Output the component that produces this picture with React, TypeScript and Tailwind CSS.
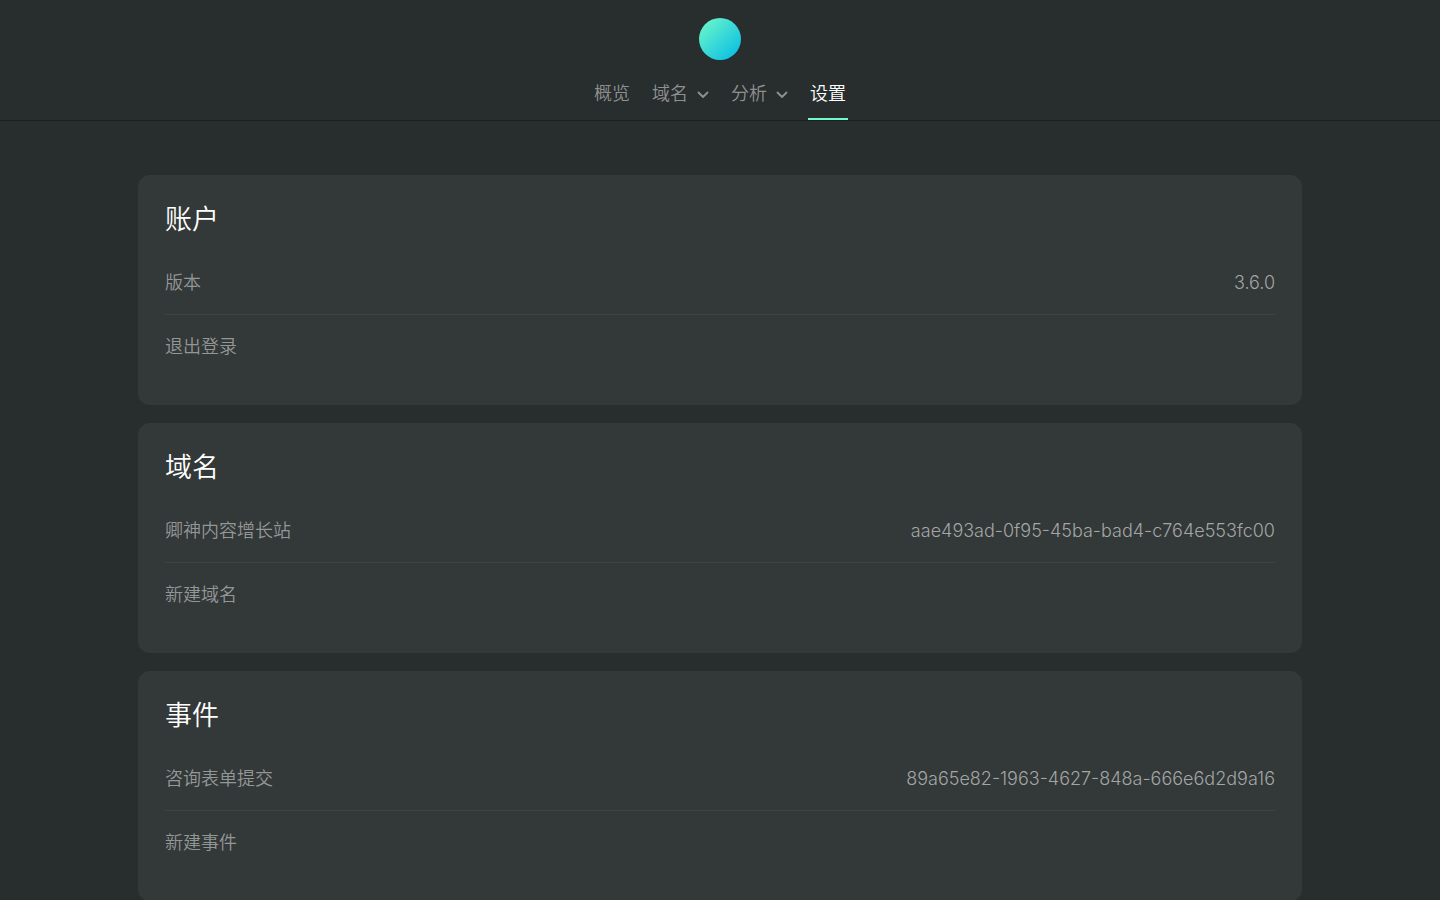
import clsx from 'clsx'

const navItems = [
    { label: '概览' },
    { label: '域名', menu: true },
    { label: '分析', menu: true },
    { label: '设置', active: true },
]

const cards = [
    { title: '账户', label: '版本', value: '3.6.0', action: '退出登录' },
    { title: '域名', label: '卿神内容增长站', value: 'aae493ad-0f95-45ba-bad4-c764e553fc00', action: '新建域名' },
    { title: '事件', label: '咨询表单提交', value: '89a65e82-1963-4627-848a-666e6d2d9a16', action: '新建事件' },
]

function Chevron() {
    return (
        <svg className="ml-[9px] mt-[3px] h-2 w-3" viewBox="0 0 12 8" fill="none" stroke="currentColor" strokeWidth="1.8" strokeLinecap="round" strokeLinejoin="round" aria-hidden="true">
            <path d="M1.5 1.5 L6 6 L10.5 1.5" />
        </svg>
    )
}

function Header() {
    return (
        <header className="flex flex-col items-center border-b border-[#1b1f1f] pt-[18px]">
            <div className="size-[42px] rounded-full bg-linear-135/srgb from-[#73fac8] to-[#00b9e6]" />
            <nav className="mt-[6px] flex gap-[18px]">
                {navItems.map((item) => (
                    <button
                        key={item.label}
                        type="button"
                        className={clsx(
                            'flex h-[54px] items-center border-b-2 px-[2px] pt-[3px]',
                            item.active ? 'border-[#73fac8] text-white' : 'border-transparent text-[#8f9191]'
                        )}
                    >
                        {item.label}
                        {item.menu && <Chevron />}
                    </button>
                ))}
            </nav>
        </header>
    )
}

function Card({ title, label, value, action }: { title: string; label: string; value: string; action: string }) {
    return (
        <section className="rounded-xl bg-[#333838] p-[27px]">
            <h2 className="mb-[14px] text-[27px] leading-[35px] text-white">{title}</h2>
            <div className="flex h-16 items-center justify-between border-b border-[#3e4343]">
                <span>{label}</span>
                <span className="font-light text-[#a3a6a6]">{value}</span>
            </div>
            <button type="button" className="flex h-[63px] w-full items-center text-left">{action}</button>
        </section>
    )
}

function App() {
    return (
        <div className="min-h-screen bg-[#282d2d] font-[Inter,'Noto_Sans_CJK_SC',sans-serif] text-lg leading-[27px] font-[350] text-[#949797]">
            <Header />
            <main className="mx-auto flex max-w-[1164px] flex-col gap-[18px] pt-[54px]">
                {cards.map((card) => (
                    <Card key={card.title} {...card} />
                ))}
            </main>
        </div>
    )
}

export default App
